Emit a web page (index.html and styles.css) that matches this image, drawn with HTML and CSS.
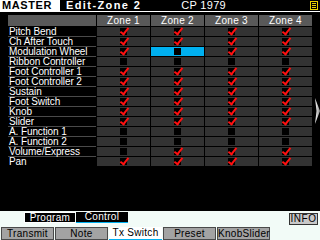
FILE: index.html
```html
<!DOCTYPE html>
<html lang="en">
<head>
    <meta charset="UTF-8">
    <title>Edit-Zone 2</title>
    <link rel="stylesheet" href="styles.css">
</head>
<body>
<div class="screen">
    <header class="top">
        <div class="mode">MASTER</div>
        <div class="title">Edit-Zone 2</div>
        <div class="perf">CP 1979</div>
        <svg class="menu-icon" width="8" height="9" viewBox="0 0 8 9">
            <rect x="0.5" y="0.5" width="7" height="8" fill="none" stroke="#e6d200"/>
            <path d="M2 2.5h4M2 4.5h4M2 6.5h4" stroke="#e6d200"/>
        </svg>
    </header>

    <!-- zone transmit switch table -->
    <div class="grid">
        <div class="hd lbl-hd"></div>
        <div class="hd">Zone 1</div>
        <div class="hd">Zone 2</div>
        <div class="hd">Zone 3</div>
        <div class="hd">Zone 4</div>

        <div class="lbl">Pitch Bend</div>
        <div class="cell"><i class="chk on"></i></div>
        <div class="cell"><i class="chk on"></i></div>
        <div class="cell"><i class="chk on"></i></div>
        <div class="cell"><i class="chk on"></i></div>

        <div class="lbl">Ch After Touch</div>
        <div class="cell"><i class="chk on"></i></div>
        <div class="cell"><i class="chk on"></i></div>
        <div class="cell"><i class="chk on"></i></div>
        <div class="cell"><i class="chk on"></i></div>

        <div class="lbl">Modulation Wheel</div>
        <div class="cell"><i class="chk on"></i></div>
        <div class="cell cursor"><i class="chk"></i></div>
        <div class="cell"><i class="chk on"></i></div>
        <div class="cell"><i class="chk on"></i></div>

        <div class="lbl">Ribbon Controller</div>
        <div class="cell"><i class="chk"></i></div>
        <div class="cell"><i class="chk"></i></div>
        <div class="cell"><i class="chk"></i></div>
        <div class="cell"><i class="chk"></i></div>

        <div class="lbl">Foot Controller 1</div>
        <div class="cell"><i class="chk on"></i></div>
        <div class="cell"><i class="chk on"></i></div>
        <div class="cell"><i class="chk on"></i></div>
        <div class="cell"><i class="chk on"></i></div>

        <div class="lbl">Foot Controller 2</div>
        <div class="cell"><i class="chk on"></i></div>
        <div class="cell"><i class="chk on"></i></div>
        <div class="cell"><i class="chk on"></i></div>
        <div class="cell"><i class="chk on"></i></div>

        <div class="lbl">Sustain</div>
        <div class="cell"><i class="chk on"></i></div>
        <div class="cell"><i class="chk on"></i></div>
        <div class="cell"><i class="chk on"></i></div>
        <div class="cell"><i class="chk on"></i></div>

        <div class="lbl">Foot Switch</div>
        <div class="cell"><i class="chk on"></i></div>
        <div class="cell"><i class="chk on"></i></div>
        <div class="cell"><i class="chk on"></i></div>
        <div class="cell"><i class="chk on"></i></div>

        <div class="lbl">Knob</div>
        <div class="cell"><i class="chk on"></i></div>
        <div class="cell"><i class="chk on"></i></div>
        <div class="cell"><i class="chk on"></i></div>
        <div class="cell"><i class="chk on"></i></div>

        <div class="lbl">Slider</div>
        <div class="cell"><i class="chk on"></i></div>
        <div class="cell"><i class="chk on"></i></div>
        <div class="cell"><i class="chk on"></i></div>
        <div class="cell"><i class="chk on"></i></div>

        <div class="lbl">A. Function 1</div>
        <div class="cell"><i class="chk"></i></div>
        <div class="cell"><i class="chk"></i></div>
        <div class="cell"><i class="chk"></i></div>
        <div class="cell"><i class="chk"></i></div>

        <div class="lbl">A. Function 2</div>
        <div class="cell"><i class="chk"></i></div>
        <div class="cell"><i class="chk"></i></div>
        <div class="cell"><i class="chk"></i></div>
        <div class="cell"><i class="chk"></i></div>

        <div class="lbl">Volume/Express</div>
        <div class="cell"><i class="chk"></i></div>
        <div class="cell"><i class="chk on"></i></div>
        <div class="cell"><i class="chk on"></i></div>
        <div class="cell"><i class="chk on"></i></div>

        <div class="lbl last">Pan</div>
        <div class="cell last"><i class="chk on"></i></div>
        <div class="cell last"><i class="chk on"></i></div>
        <div class="cell last"><i class="chk on"></i></div>
        <div class="cell last"><i class="chk on"></i></div>
    </div>

    <svg class="side-arrow" width="5" height="26" viewBox="0 0 5 26">
        <defs>
            <linearGradient id="arrowFade" x1="0" y1="0" x2="1" y2="0">
                <stop offset="0" stop-color="#ffffff"/>
                <stop offset="1" stop-color="#8a8a8a"/>
            </linearGradient>
        </defs>
        <polygon points="0,0 5,13 0,26 1.5,13" fill="url(#arrowFade)"/>
    </svg>

    <div class="footer">
        <div class="subbar">
            <div class="subtabs">
                <span class="sub">Program</span>
                <span class="sub current">Control</span>
            </div>
            <button class="info">INFO</button>
        </div>
        <nav class="tabs">
            <span class="tab">Transmit</span>
            <span class="tab">Note</span>
            <span class="tab active">Tx Switch</span>
            <span class="tab">Preset</span>
            <span class="tab">KnobSlider</span>
        </nav>
    </div>
</div>
</body>
</html>
```

FILE: styles.css
```css
* {
    box-sizing: border-box;
}

body {
    margin: 0;
    background: #000;
    font-family: "Liberation Sans", Arial, sans-serif;
}

.screen {
    position: relative;
    width: 320px;
    height: 240px;
    background: #000;
    color: #fff;
    display: flex;
    flex-direction: column;
    overflow: hidden;
}

/* Title bar */
.top {
    display: flex;
    align-items: flex-start;
    height: 12px;
    border-bottom: 1px solid #fff;
}

.mode {
    width: 60px;
    height: 11px;
    background: #fff;
    color: #000;
    font-weight: bold;
    font-size: 11px;
    line-height: 11px;
    letter-spacing: 0.6px;
    padding-left: 2px;
}

.title {
    margin-left: 6px;
    font-weight: bold;
    font-size: 11px;
    line-height: 11px;
    letter-spacing: 1.4px;
    white-space: nowrap;
}

.perf {
    margin-left: 40px;
    font-size: 11px;
    line-height: 11px;
    letter-spacing: 0.3px;
    white-space: nowrap;
}

.menu-icon {
    margin-left: auto;
    margin-right: 2px;
    margin-top: 1px;
}

/* Table */
.grid {
    display: grid;
    grid-template-columns: 88px repeat(4, 53px);
    grid-template-rows: 12px repeat(14, 10px);
    column-gap: 1px;
    margin: 3px 0 0 8px;
    font-size: 10px;
}

.hd {
    background: #595959;
    border-bottom: 1px solid #000;
    text-align: center;
    line-height: 11px;
    letter-spacing: 0.3px;
}

.lbl {
    border-bottom: 1px solid #4a4a4a;
    line-height: 9px;
    padding-left: 1px;
    white-space: nowrap;
    letter-spacing: -0.1px;
}

.cell {
    background: #333;
    border-bottom: 1px solid #000;
    display: flex;
    align-items: center;
    justify-content: center;
}

.lbl.last, .cell.last {
    border-bottom: none;
    height: 9px;
}

.cell.cursor {
    background: #00b0f0;
}

/* Check boxes */
.chk {
    position: relative;
    width: 7px;
    height: 7px;
    background: #000;
    margin-left: -1px;
}

.chk.on::after {
    content: "";
    position: absolute;
    left: 2px;
    top: -2px;
    width: 3px;
    height: 7px;
    border-right: 2px solid #ff1010;
    border-bottom: 2px solid #ff1010;
    transform: rotate(38deg);
}

/* Right side page arrow */
.side-arrow {
    position: absolute;
    right: 0;
    top: 98px;
}

/* Footer */
.footer {
    margin-top: auto;
    height: 29px;
    background: #f2fbf7;
    display: flex;
    flex-direction: column;
}

.subbar {
    display: flex;
    align-items: flex-start;
    height: 13px;
    padding-top: 1px;
}

.subtabs {
    display: flex;
    margin-left: 24px;
    background: #000;
}

.sub {
    width: 52px;
    height: 11px;
    font-size: 10px;
    line-height: 10px;
    text-align: center;
    letter-spacing: 0.3px;
}

.sub:first-child {
    border: 1px solid #fff;
    border-right-color: #f2fbf7;
}

.sub.current {
    border-bottom: 1px solid #00b0f0;
}

.info {
    margin: 1px 2px 0 auto;
    width: 29px;
    height: 12px;
    padding: 0;
    background: #c8c8c8;
    border: 1px solid #333;
    border-radius: 0;
    color: #000;
    font-family: "Liberation Sans", Arial, sans-serif;
    font-size: 10px;
    line-height: 10px;
    letter-spacing: 0.5px;
}

.tabs {
    display: flex;
    gap: 1px;
    margin-top: 3px;
    padding-left: 1px;
}

.tab {
    width: 53px;
    height: 13px;
    background: #a3a3a3;
    border: 1px solid #4a4a4a;
    color: #000;
    font-size: 10px;
    line-height: 11px;
    text-align: center;
    letter-spacing: 0.3px;
}

.tab.active {
    background: #fff;
    border: none;
    border-bottom: 1px solid #00b0f0;
    line-height: 12px;
}
```
